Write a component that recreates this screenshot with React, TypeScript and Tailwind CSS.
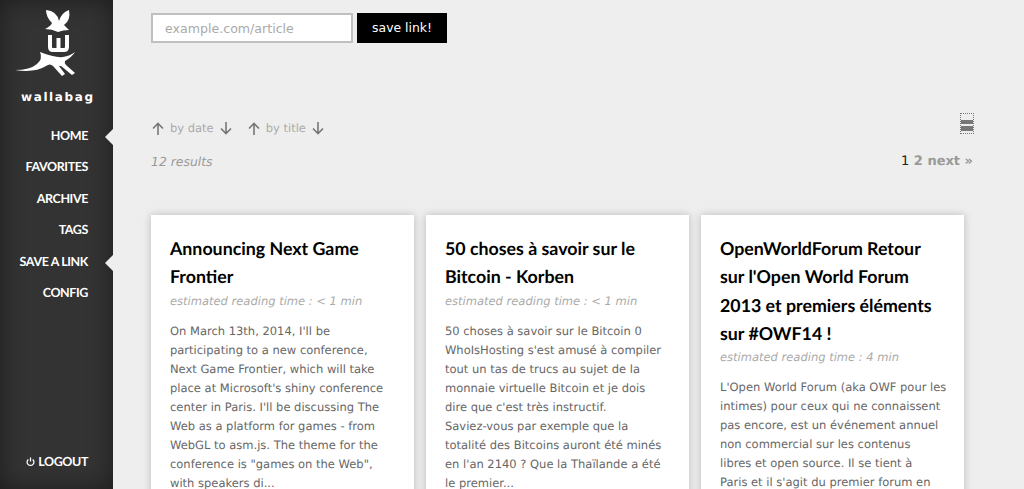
const dejavu = "font-['DejaVu_Sans',sans-serif]";
const heading = "font-['Lato','Noto_Sans',sans-serif]";

const links = [
  { label: "HOME", marked: true },
  { label: "FAVORITES", marked: false },
  { label: "ARCHIVE", marked: false },
  { label: "TAGS", marked: false },
  { label: "SAVE A LINK", marked: true },
  { label: "CONFIG", marked: false },
];

type Article = { title: string; time: string; firstLine?: string; body: string[] };

const articles: Article[] = [
  {
    title: "Announcing Next Game Frontier",
    time: "< 1 min",
    body: ["On March 13th, 2014, I'll be participating to a new conference, Next Game Frontier, which will take place at Microsoft's shiny conference center in Paris. I'll be discussing The Web as a platform for games - from WebGL to asm.js. The theme for the conference is \"games on the Web\", with speakers di..."],
  },
  {
    title: "50 choses à savoir sur le Bitcoin - Korben",
    time: "< 1 min",
    body: [
      "50 choses à savoir sur le Bitcoin 0 WhoIsHosting s'est amusé à compiler tout un tas de trucs au sujet de la monnaie virtuelle Bitcoin et je dois dire que c'est très instructif.",
      "Saviez-vous par exemple que la totalité des Bitcoins auront été minés en l'an 2140 ? Que la Thaïlande a été le premier...",
    ],
  },
  {
    title: "OpenWorldForum Retour sur l'Open World Forum 2013 et premiers éléments sur #OWF14 !",
    time: "4 min",
    firstLine: "L'Open World Forum (aka OWF pour les",
    body: [
      "intimes) pour ceux qui ne connaissent pas encore, est un événement annuel non commercial sur les contenus libres et open source. Il se tient à",
      "Paris et il s'agit du premier forum en",
      "Europe sur ce sujet, qui réunit chaque année",
    ],
  },
];

function Logo() {
  return (
    <svg width="64" height="66" viewBox="0 0 64 66" fill="#fff">
      <path d="M31 0 Q42 1 44 11 Q46 3 54 0 Q56 10 49 15 L54 20 Q48 20 43 22 Q37 19 30 19 Q36 16 37 13 Q31 7 31 0 Z" />
      <path d="M35 25 V37 Q35 40 38 40 H49 Q52 40 52 37 V25 M43.5 28 V40" fill="none" stroke="#fff" strokeWidth="4" />
      <path d="M25 42 Q40 48 48 47 Q55 46 60 42 Q57 47 50 51 Q49 53 51 55 L60 63 L57 65 L46 56 L44 56 L50 64 L47 66 L38 56 Q35 53 31 56 Q20 63 0 60 Q15 60 22 54 Q28 49 25 42 Z" />
    </svg>
  );
}

function Arrow({ down }: { down?: boolean }) {
  return (
    <svg width="12" height="13" viewBox="0 0 12 13" fill="none" stroke="#777777" strokeWidth="1.6" className={down ? "rotate-180" : ""}>
      <path d="M6 13 V1.5 M1 6.5 L6 1.5 L11 6.5" />
    </svg>
  );
}

function Sidebar() {
  return (
    <aside className="relative flex h-full w-[113px] shrink-0 flex-col bg-[#333333] shadow-[inset_0_0_24px_rgba(0,0,0,0.45)]">
      <div className="flex flex-col items-start pt-[10px] pl-[15px]">
        <Logo />
        <div className={`mt-[13px] ml-[6px] text-[12px] leading-4 font-bold tracking-[1.6px] text-white ${dejavu}`}>
          wallabag
        </div>
      </div>
      <nav className={`mt-[19px] flex flex-col ${heading}`}>
        {links.map((link) => (
          <a
            key={link.label}
            className="relative h-[31.4px] pr-[25px] text-right text-[12.5px] leading-[24px] font-bold tracking-[-0.4px] text-white"
          >
            {link.label}
            {link.marked && (
              <span className="absolute top-[5px] right-0 h-0 w-0 border-y-[8px] border-r-[8px] border-y-transparent border-r-[#eeeeee]" />
            )}
          </a>
        ))}
      </nav>
      <a className={`mt-auto mb-[19px] flex items-center justify-end gap-[3px] pr-[25px] text-[12.5px] leading-4 font-bold tracking-[-0.4px] text-white ${heading}`}>
        <svg width="9" height="10" viewBox="0 0 10 11" fill="none" stroke="#fff" strokeWidth="1.4">
          <path d="M5 0.5 V5" />
          <path d="M2.6 2.6 A3.8 3.8 0 1 0 7.4 2.6" />
        </svg>
        LOGOUT
      </a>
    </aside>
  );
}

function SortLink({ label }: { label: string }) {
  return (
    <div className="flex items-center gap-[6px]">
      <Arrow />
      <span className="text-[11.5px] text-[#aaaaaa]">{label}</span>
      <Arrow down />
    </div>
  );
}

function Card({ title, time, firstLine, body }: Article) {
  return (
    <article className="h-[400px] w-[263px] shrink-0 bg-white px-[19px] pt-[19px] shadow-[0_0_8px_rgba(0,0,0,0.22)]">
      <h2 className={`text-[17.8px] leading-[28.4px] font-bold text-black ${heading}`}>{title}</h2>
      <p className="mt-[1px] text-[11.5px] leading-[19px] text-[#aaaaaa] italic">estimated reading time : {time}</p>
      <div className="mt-[11px] text-[11.5px] leading-[19px] text-[#666666]">
        {firstLine && <p className="whitespace-nowrap">{firstLine}</p>}
        {body.map((text) => (
          <p key={text}>{text}</p>
        ))}
      </div>
    </article>
  );
}

export default function App() {
  return (
    <div className={`flex h-[489px] w-[1024px] overflow-hidden bg-[#eeeeee] [text-rendering:geometricPrecision] ${dejavu}`}>
      <Sidebar />
      <main className="min-w-0 flex-1 pl-[38px]">
        <form className="flex items-start gap-[4px] pt-[13px]">
          <input
            placeholder="example.com/article"
            className="h-[30px] w-[202px] border-2 border-[#c0c0c0] bg-white px-[12px] text-[12.6px] outline-none placeholder:text-[#aaaaaa]"
          />
          <button className="h-[30px] w-[90px] bg-black text-[12.4px] text-white">save link!</button>
        </form>
        <div className="mt-[70px] flex items-start justify-between pr-[50px]">
          <div className="flex gap-[16px] pt-[7px] pl-px">
            <SortLink label="by date" />
            <SortLink label="by title" />
          </div>
          <div className="flex h-[21px] w-[14px] flex-col gap-[2px] border border-dotted border-[#777777] pt-[6px]">
            <div className="h-[4px] shrink-0 bg-[#777777]" />
            <div className="h-[5px] shrink-0 bg-[#777777]" />
          </div>
        </div>
        <div className="mt-[15px] flex items-center justify-between pr-[51px]">
          <span className="text-[12.4px] text-[#999999] italic">12 results</span>
          <span className="text-[13px] font-bold text-[#999999]">
            <span className="font-normal text-[#222222]">1</span> 2 next »
          </span>
        </div>
        <div className="mt-[43px] flex gap-[12px]">
          {articles.map((a) => (
            <Card key={a.title} {...a} />
          ))}
        </div>
      </main>
    </div>
  );
}
